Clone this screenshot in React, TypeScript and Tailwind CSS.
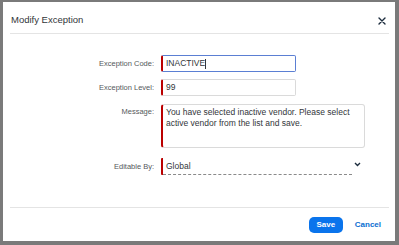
import React from "react";

export default function App() {
  const font = { fontFamily: '"Liberation Sans", Arial, sans-serif' };
  return (
    <div className="w-[399px] h-[245px] bg-[#7a7a7a] pt-[2px] pl-[3px]" style={font}>
      <div className="w-[392px] h-[239px] bg-white flex flex-col">
        {/* Header */}
        <div className="h-[31px] pt-[6px] pl-[8px] pr-[9px] flex items-center justify-between">
          <span className="text-[9.5px] text-[#32363a]">Modify Exception</span>
          <svg width="8" height="8" viewBox="0 0 8 8" className="text-[#1d2d3e]">
            <path d="M1 1 L7 7 M7 1 L1 7" stroke="currentColor" strokeWidth="1.4" strokeLinecap="round" />
          </svg>
        </div>
        <div className="ml-[7px] mr-[6px] h-[1px] bg-[#e4e4e4]" />

        {/* Form */}
        <div className="flex-1 pt-[21px] grid grid-cols-[151px_1fr] gap-x-[7px] content-start">
          <div className="h-[17px] flex items-center justify-end text-[7.5px] text-[#55595c]">Exception Code:</div>
          <div className="h-[17px] w-[135px] flex items-center border border-[#5b7fd3] border-l-[2px] border-l-[#bb0000] rounded-[2px] pl-[3px] text-[8.5px] text-[#32363a]">
            INACTIVE<span className="inline-block w-[1px] h-[10px] bg-[#32363a]" />
          </div>

          <div className="mt-[7px] h-[17px] flex items-center justify-end text-[7.5px] text-[#55595c]">Exception Level:</div>
          <div className="mt-[7px] h-[17px] w-[135px] flex items-center border border-[#dadada] border-l-[2px] border-l-[#bb0000] rounded-[2px] pl-[3px] text-[8.5px] text-[#32363a]">
            99
          </div>

          <div className="mt-[8px] pt-[3px] flex justify-end text-[7.5px] text-[#55595c] leading-[10px]">Message:</div>
          <div className="mt-[8px] h-[44px] w-[204px] border border-[#dadada] border-l-[2px] border-l-[#bb0000] rounded-[3px] pl-[3px] pr-[4px] pt-[2px] text-[8.5px] leading-[11px] text-[#32363a]">
            You have selected inactive vendor. Please select active vendor from the list and save.
          </div>

          <div className="mt-[10px] h-[17px] flex items-center justify-end text-[7.5px] text-[#55595c]">Editable By:</div>
          <div className="mt-[10px] h-[17px] w-[200px] flex items-center">
            <div className="h-[17px] w-[191px] flex border-l-[2px] border-solid border-l-[#bb0000] rounded-l-[1px]">
              <div className="flex-1 flex items-center border-b border-dashed border-b-[#8a8a8a] pl-[3px] text-[8.5px] text-[#32363a]">
                Global
              </div>
            </div>
            <svg width="7" height="5" viewBox="0 0 7 5" className="ml-[2px] mb-[4px] text-[#1d2d3e]">
              <path d="M1 1 L3.5 3.5 L6 1" stroke="currentColor" strokeWidth="1.4" fill="none" />
            </svg>
          </div>
        </div>

        {/* Footer */}
        <div className="ml-[7px] mr-[6px] h-[1px] bg-[#e4e4e4]" />
        <div className="pt-[9px] pb-[8px] pr-[14px] flex justify-end items-center gap-[12px]">
          <button className="h-[16px] w-[34px] rounded-[5px] bg-[#0a74ec] text-white text-[8px] font-bold">Save</button>
          <button className="text-[8px] font-bold text-[#0a6ed1]">Cancel</button>
        </div>
      </div>
    </div>
  );
}
